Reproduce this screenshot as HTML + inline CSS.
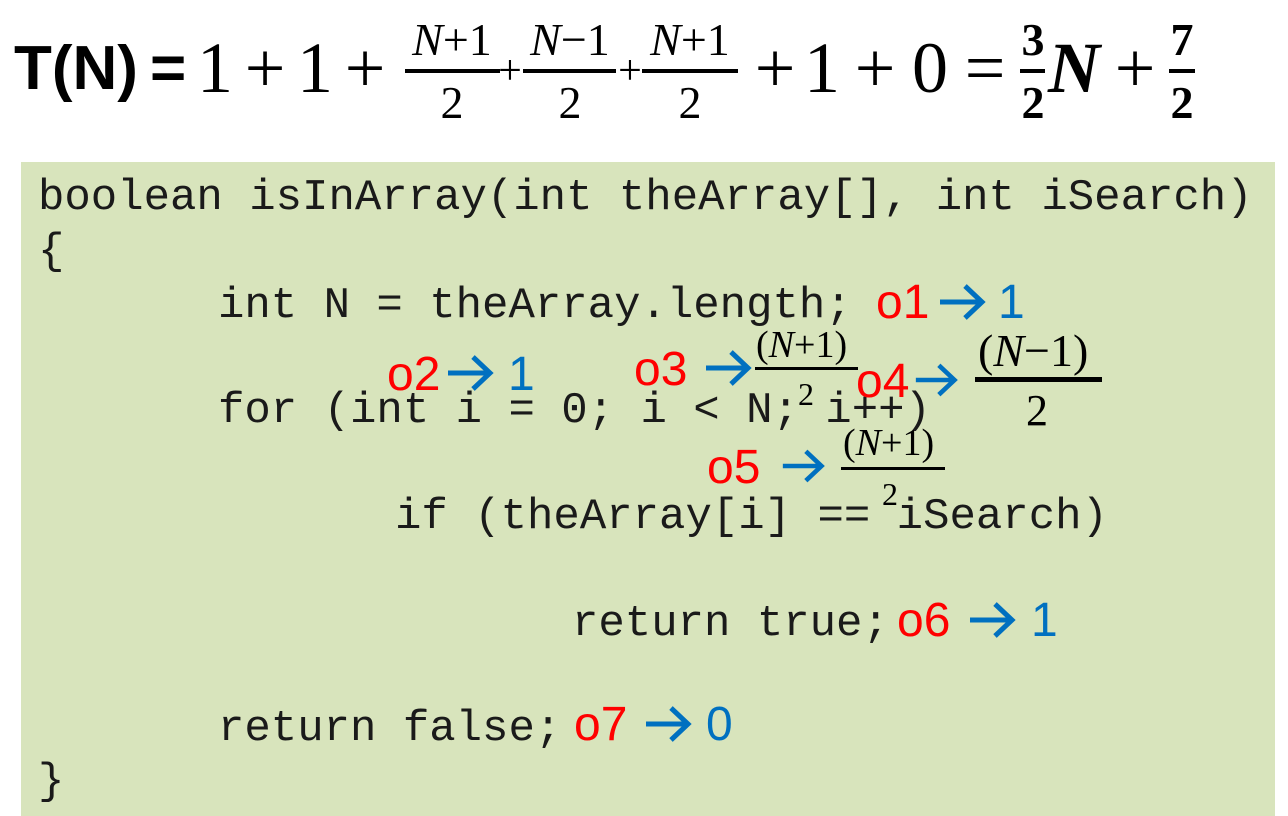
<!DOCTYPE html>
<html><head><meta charset="utf-8">
<style>
html,body{margin:0;padding:0;background:#fff;}
body{width:1288px;height:816px;position:relative;overflow:hidden;}
.t{position:absolute;line-height:1;white-space:pre;}
.c{position:absolute;line-height:1;white-space:pre;width:120px;text-align:center;}
.m{font-family:"Liberation Mono",monospace;font-size:44px;color:#1a1a1a;}
.a{font-family:"Liberation Sans",sans-serif;font-size:48px;}
.r{color:#ff0000;}
.b{color:#0070c0;}
.s{font-family:"Liberation Serif",serif;color:#000;}
.big{font-size:72px;top:32px;}
.num{font-size:46px;top:17px;}
.den{font-size:46px;top:80px;}
.bar{position:absolute;background:#000;}
svg.ar{position:absolute;}
#box{position:absolute;left:21px;top:162px;width:1254px;height:654px;background:#d8e4bc;}
</style></head><body>

<!-- Top formula -->
<div class="t" style="left:14px;top:38px;font-family:'Liberation Sans',sans-serif;font-weight:bold;font-size:62px;">T(N)</div>
<div class="t" style="left:150px;top:38px;font-family:'Liberation Sans',sans-serif;font-weight:bold;font-size:62px;">=</div>

<div class="c s big" style="left:155px;">1</div>
<div class="c s big" style="left:205px;">+</div>
<div class="c s big" style="left:255px;">1</div>
<div class="c s big" style="left:305px;">+</div>

<div class="c s num" style="left:392px;"><i>N</i>+1</div>
<div class="bar" style="left:405px;top:69px;width:95px;height:4px;"></div>
<div class="c s den" style="left:392px;">2</div>
<div class="c s" style="left:450px;top:50px;font-size:42px;">+</div>
<div class="c s num" style="left:510px;"><i>N</i>−1</div>
<div class="bar" style="left:523px;top:69px;width:93px;height:4px;"></div>
<div class="c s den" style="left:510px;">2</div>
<div class="c s" style="left:570px;top:50px;font-size:42px;">+</div>
<div class="c s num" style="left:630px;"><i>N</i>+1</div>
<div class="bar" style="left:642px;top:69px;width:96px;height:4px;"></div>
<div class="c s den" style="left:630px;">2</div>

<div class="c s big" style="left:715px;">+</div>
<div class="c s big" style="left:762px;">1</div>
<div class="c s big" style="left:815px;">+</div>
<div class="c s big" style="left:870px;">0</div>
<div class="c s big" style="left:925px;">=</div>

<div class="c s num" style="left:973px;font-weight:bold;">3</div>
<div class="bar" style="left:1020px;top:69px;width:25px;height:4px;"></div>
<div class="c s den" style="left:973px;font-weight:bold;">2</div>
<div class="c s big" style="left:1014px;font-style:italic;font-weight:bold;">N</div>
<div class="c s big" style="left:1075px;">+</div>
<div class="c s num" style="left:1122px;font-weight:bold;">7</div>
<div class="bar" style="left:1169px;top:69px;width:26px;height:4px;"></div>
<div class="c s den" style="left:1122px;font-weight:bold;">2</div>

<div id="box"></div>

<!-- Code -->
<div class="t m" style="left:38px;top:176px;">boolean isInArray(int theArray[], int iSearch)</div>
<div class="t m" style="left:38px;top:230px;">{</div>
<div class="t m" style="left:218px;top:284px;">int N = theArray.length;</div>
<div class="t m" style="left:218px;top:389px;">for (int i = 0; i &lt; N; i++)</div>
<div class="t m" style="left:395px;top:495px;">if (theArray[i] == iSearch)</div>
<div class="t m" style="left:572px;top:602px;">return true;</div>
<div class="t m" style="left:218px;top:707px;">return false;</div>
<div class="t m" style="left:38px;top:760px;">}</div>

<!-- o1 -->
<div class="t a r" style="left:876px;top:279px;">o1</div>
<svg class="ar" style="left:938px;top:282px" width="50" height="40" viewBox="0 0 50 40"><path d="M2 20H44M27 4L44 20L27 36" fill="none" stroke="#0070c0" stroke-width="5"/></svg>
<div class="t a b" style="left:998px;top:279px;">1</div>

<!-- o2 -->
<div class="t a r" style="left:387px;top:351px;">o2</div>
<svg class="ar" style="left:446px;top:353px" width="50" height="40" viewBox="0 0 50 40"><path d="M2 20H44M27 4L44 20L27 36" fill="none" stroke="#0070c0" stroke-width="5"/></svg>
<div class="t a b" style="left:508px;top:351px;">1</div>

<!-- o3 -->
<div class="t a r" style="left:634px;top:346px;">o3</div>
<svg class="ar" style="left:704px;top:348px" width="50" height="40" viewBox="0 0 50 40"><path d="M2 20H44M27 4L44 20L27 36" fill="none" stroke="#0070c0" stroke-width="5"/></svg>
<div class="t s" style="left:756px;top:326px;font-size:38px;">(<i>N</i>+1)</div>
<div class="bar" style="left:755px;top:367px;width:103px;height:3px;"></div>
<div class="t s" style="left:798px;top:378px;font-size:32px;">2</div>

<!-- o4 -->
<div class="t a r" style="left:856px;top:358px;">o4</div>
<svg class="ar" style="left:914px;top:360px" width="46" height="40" viewBox="0 0 50 40"><path d="M2 20H44M27 4L44 20L27 36" fill="none" stroke="#0070c0" stroke-width="5"/></svg>
<div class="t s" style="left:978px;top:328px;font-size:46px;">(<i>N</i>−1)</div>
<div class="bar" style="left:975px;top:377px;width:127px;height:5px;"></div>
<div class="t s" style="left:1026px;top:389px;font-size:44px;">2</div>

<!-- o5 -->
<div class="t a r" style="left:707px;top:444px;">o5</div>
<svg class="ar" style="left:781px;top:446px" width="46" height="40" viewBox="0 0 50 40"><path d="M2 20H44M27 4L44 20L27 36" fill="none" stroke="#0070c0" stroke-width="5"/></svg>
<div class="t s" style="left:843px;top:424px;font-size:38px;">(<i>N</i>+1)</div>
<div class="bar" style="left:841px;top:467px;width:104px;height:3px;"></div>
<div class="t s" style="left:882px;top:478px;font-size:32px;">2</div>

<!-- o6 -->
<div class="t a r" style="left:897px;top:597px;">o6</div>
<svg class="ar" style="left:968px;top:600px" width="50" height="40" viewBox="0 0 50 40"><path d="M2 20H44M27 4L44 20L27 36" fill="none" stroke="#0070c0" stroke-width="5"/></svg>
<div class="t a b" style="left:1031px;top:597px;">1</div>

<!-- o7 -->
<div class="t a r" style="left:574px;top:701px;">o7</div>
<svg class="ar" style="left:644px;top:704px" width="50" height="40" viewBox="0 0 50 40"><path d="M2 20H44M27 4L44 20L27 36" fill="none" stroke="#0070c0" stroke-width="5"/></svg>
<div class="t a b" style="left:706px;top:701px;">0</div>

</body></html>
